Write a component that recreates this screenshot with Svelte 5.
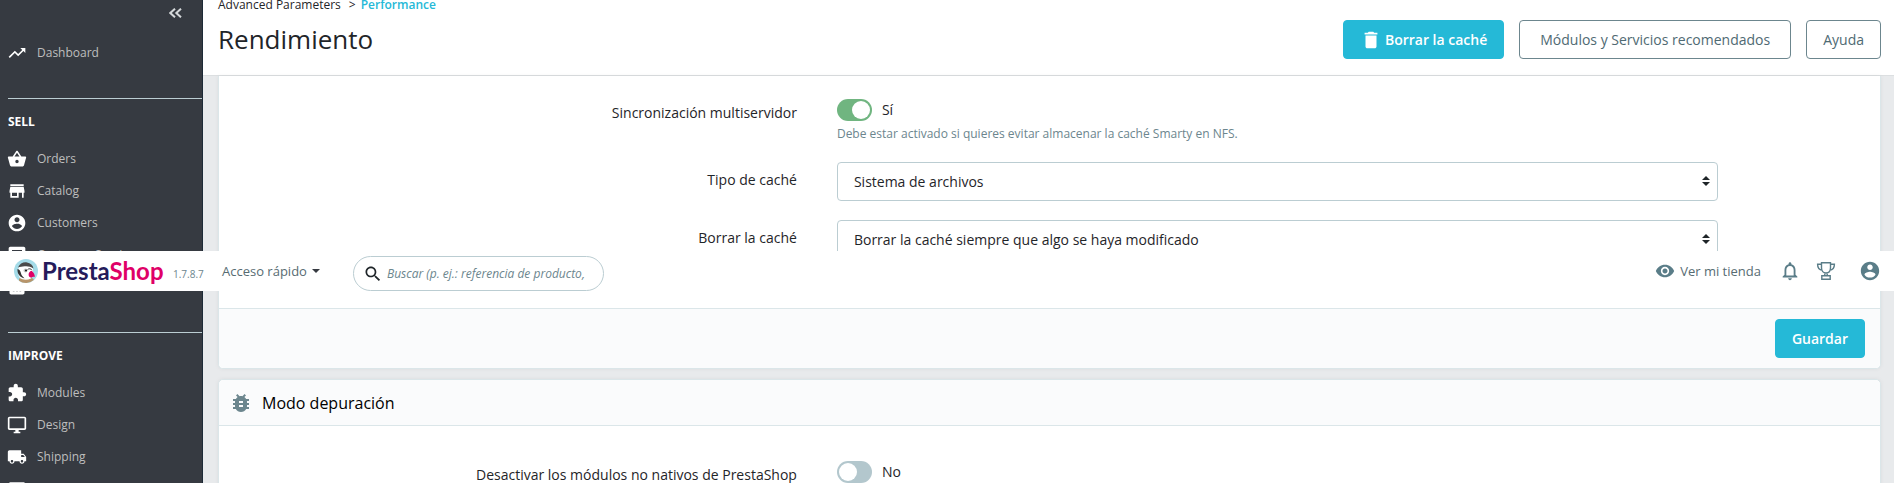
<script>
  const icons = {
    dashboard: 'M16 6l2.29 2.29-4.88 4.88-4-4L2 16.59 3.41 18l6-6 4 4 6.3-6.29L22 12V6z',
    basket: 'M17.21 9l-4.38-6.56c-.19-.28-.51-.42-.83-.42-.32 0-.64.14-.83.43L6.79 9H2c-.55 0-1 .45-1 1 0 .09.01.18.04.27l2.54 9.27c.23.84 1 1.46 1.92 1.46h13c.92 0 1.69-.62 1.93-1.46l2.54-9.27L23 10c0-.55-.45-1-1-1h-4.79zM9 9l3-4.4L15 9H9zm3 8c-1.1 0-2-.9-2-2s.9-2 2-2 2 .9 2 2-.9 2-2 2z',
    store: 'M20 4H4v2h16V4zm1 10v-2l-1-5H4l-1 5v2h1v6h10v-6h4v6h2v-6h1zm-9 4H6v-4h6v4z',
    person: 'M12 2C6.48 2 2 6.48 2 12s4.48 10 10 10 10-4.48 10-10S17.52 2 12 2zm0 3c1.66 0 3 1.34 3 3s-1.34 3-3 3-3-1.34-3-3 1.34-3 3-3zm0 14.2c-2.5 0-4.71-1.28-6-3.22.03-1.99 4-3.08 6-3.08 1.99 0 5.97 1.09 6 3.08-1.29 1.94-3.5 3.22-6 3.22z',
    chat: 'M20 2H4c-1.1 0-2 .9-2 2v18l4-4h14c1.1 0 2-.9 2-2V4c0-1.1-.9-2-2-2zM6 6h12v2H6V6zm12 5H6V9h12v2z',
    stats: 'M19 3H5c-1.1 0-2 .9-2 2v14c0 1.1.9 2 2 2h14c1.1 0 2-.9 2-2V5c0-1.1-.9-2-2-2zM9 17H7v-7h2v7zm4 0h-2V7h2v10zm4 0h-2v-4h2v4z',
    modules: 'M20.5 11H19V7c0-1.1-.9-2-2-2h-4V3.5C13 2.12 11.88 1 10.5 1S8 2.12 8 3.5V5H4c-1.1 0-1.99.9-1.99 2v3.8H3.5c1.49 0 2.7 1.21 2.7 2.7s-1.21 2.7-2.7 2.7H2V20c0 1.1.9 2 2 2h3.8v-1.5c0-1.49 1.21-2.7 2.7-2.7 1.49 0 2.7 1.21 2.7 2.7V22H17c1.1 0 2-.9 2-2v-4h1.5c1.38 0 2.5-1.12 2.5-2.5S21.88 11 20.5 11z',
    design: 'M21 2H3c-1.1 0-2 .9-2 2v12c0 1.1.9 2 2 2h7v2H8v2h8v-2h-2v-2h7c1.1 0 2-.9 2-2V4c0-1.1-.9-2-2-2zm0 14H3V4h18v12z',
    shipping: 'M20 8h-3V4H3c-1.1 0-2 .9-2 2v11h2c0 1.66 1.34 3 3 3s3-1.34 3-3h6c0 1.66 1.34 3 3 3s3-1.34 3-3h2v-5l-3-4zM6 18.5c-.83 0-1.5-.67-1.5-1.5s.67-1.5 1.5-1.5 1.5.67 1.5 1.5-.67 1.5-1.5 1.5zm13.5-9l1.96 2.5H17V9.5h2.5zm-1.5 9c-.83 0-1.5-.67-1.5-1.5s.67-1.5 1.5-1.5 1.5.67 1.5 1.5-.67 1.5-1.5 1.5z',
    payment: 'M20 4H4c-1.11 0-1.99.89-1.99 2L2 18c0 1.11.89 2 2 2h16c1.11 0 2-.89 2-2V6c0-1.11-.89-2-2-2zm0 14H4v-6h16v6zm0-10H4V6h16v2z',
    trash: 'M6 19c0 1.1.9 2 2 2h8c1.1 0 2-.9 2-2V7H6v12zM19 4h-3.5l-1-1h-5l-1 1H5v2h14V4z',
    bug: 'M20 8h-2.81c-.45-.78-1.07-1.45-1.82-1.96L17 4.41 15.59 3l-2.17 2.17C12.96 5.06 12.49 5 12 5c-.49 0-.96.06-1.41.17L8.41 3 7 4.41l1.62 1.63C7.88 6.55 7.26 7.22 6.81 8H4v2h2.09c-.05.33-.09.66-.09 1v1H4v2h2v1c0 .34.04.67.09 1H4v2h2.81c1.04 1.79 2.97 3 5.19 3s4.15-1.21 5.19-3H20v-2h-2.09c.05-.33.09-.66.09-1v-1h2v-2h-2v-1c0-.34-.04-.67-.09-1H20V8zm-6 8h-4v-2h4v2zm0-4h-4v-2h4v2z',
    search: 'M15.5 14h-.79l-.28-.27C15.41 12.59 16 11.11 16 9.5 16 5.91 13.09 3 9.5 3S3 5.91 3 9.5 5.91 16 9.5 16c1.61 0 3.09-.59 4.23-1.57l.27.28v.79l5 4.99L20.49 19l-4.99-5zm-6 0C7.01 14 5 11.99 5 9.5S7.01 5 9.5 5 14 7.01 14 9.5 11.99 14 9.5 14z',
    eye: 'M12 4.5C7 4.5 2.73 7.61 1 12c1.73 4.39 6 7.5 11 7.5s9.27-3.11 11-7.5c-1.73-4.39-6-7.5-11-7.5zM12 17c-2.76 0-5-2.24-5-5s2.24-5 5-5 5 2.24 5 5-2.24 5-5 5zm0-8c-1.66 0-3 1.34-3 3s1.34 3 3 3 3-1.34 3-3-1.34-3-3-3z',
    bell: 'M12 22c1.1 0 2-.9 2-2h-4c0 1.1.9 2 2 2zm6-6v-5c0-3.07-1.63-5.64-4.5-6.32V4c0-.83-.67-1.5-1.5-1.5s-1.5.67-1.5 1.5v.68C7.64 5.36 6 7.92 6 11v5l-2 2v1h16v-1l-2-2zm-2 1H8v-6c0-2.48 1.51-4.5 4-4.5s4 2.02 4 4.5v6z'
  };

  const sections = [
    {
      title: 'SELL',
      items: [
        ['basket', 'Orders'],
        ['store', 'Catalog'],
        ['person', 'Customers'],
        ['chat', 'Customer Service'],
        ['stats', 'Stats']
      ]
    },
    {
      title: 'IMPROVE',
      items: [
        ['modules', 'Modules'],
        ['design', 'Design'],
        ['shipping', 'Shipping'],
        ['payment', 'Payment']
      ]
    }
  ];

  let sync = $state(true);
  let noModules = $state(false);
</script>

{#snippet icon(name)}
  <svg class="icon" viewBox="0 0 24 24" aria-hidden="true"><path d={icons[name]} /></svg>
{/snippet}

{#snippet arrows()}
  <svg class="arrows" viewBox="0 0 8 10" aria-hidden="true"><path d="M4 0l4 4H0zM4 10L0 6h8z" /></svg>
{/snippet}

<div class="page">
  <nav class="sidebar">
    <button class="collapse" aria-label="«">
      <svg viewBox="0 0 13 10" aria-hidden="true"><path d="M6 .7L1.3 5 6 9.3M12 .7L7.300 5 12 9.300" /></svg>
    </button>
    <a class="item" href="#dashboard">{@render icon('dashboard')}<span>Dashboard</span></a>
    {#each sections as section}
      <section>
        <h2>{section.title}</h2>
        {#each section.items as [name, label]}
          <a class="item" href="#{name}">{@render icon(name)}<span>{label}</span></a>
        {/each}
      </section>
    {/each}
  </nav>

  <div class="content">
    <header class="head">
      <div class="titles">
        <div class="crumbs">
          <a href="#advanced">Advanced Parameters</a><span class="sep">&gt;</span><a class="current" href="#performance">Performance</a>
        </div>
        <h1>Rendimiento</h1>
      </div>
      <div class="actions">
        <button class="btn primary">{@render icon('trash')}<span>Borrar la caché</span></button>
        <button class="btn outline wide">Módulos y Servicios recomendados</button>
        <button class="btn outline">Ayuda</button>
      </div>
    </header>

    <main>
      <section class="card first">
        <div class="body">
          <div class="row">
            <label class="name" for="sync">Sincronización multiservidor</label>
            <div class="field">
              <label class="switch">
                <input id="sync" type="checkbox" bind:checked={sync} />
                <span>{sync ? 'Sí' : 'No'}</span>
              </label>
              <small>Debe estar activado si quieres evitar almacenar la caché Smarty en NFS.</small>
            </div>
          </div>
          <div class="row tall">
            <label class="name" for="type">Tipo de caché</label>
            <div class="field select">
              <select id="type"><option>Sistema de archivos</option></select>
              {@render arrows()}
            </div>
          </div>
          <div class="row tall">
            <label class="name" for="clear">Borrar la caché</label>
            <div class="field select">
              <select id="clear"><option>Borrar la caché siempre que algo se haya modificado</option></select>
              {@render arrows()}
            </div>
          </div>
        </div>
        <footer><button class="btn primary save">Guardar</button></footer>
      </section>

      <section class="card">
        <h3>{@render icon('bug')}<span>Modo depuración</span></h3>
        <div class="body debug">
          <div class="row">
            <label class="name" for="nomodules">Desactivar los módulos no nativos de PrestaShop</label>
            <div class="field">
              <label class="switch">
                <input id="nomodules" type="checkbox" bind:checked={noModules} />
                <span>{noModules ? 'Sí' : 'No'}</span>
              </label>
            </div>
          </div>
        </div>
      </section>
    </main>
  </div>

  <div class="topbar">
    <a class="brand" href="#home">
      <svg viewBox="0 0 24 24" aria-hidden="true">
        <circle cx="12" cy="12" r="12" fill="#a4dbe8" />
        <path d="M5 19.500c4-1.500 10-1.500 14 0l.8 1.600A12 12 0 0 1 5 21.700z" fill="#b8956a" />
        <path d="M4.500 9c1-4 5-5.500 8-5 4 .5 6.500 3.500 6.500 7l-2 8.500c-4 1.800-8 1.600-11-.5-2-3-2.500-6-1.500-10z" fill="#fff" />
        <path d="M4 8.500C5.500 4.500 9.500 2.800 13 3.400c3.500.6 6 2.600 6.500 6.100-3-2-6-2.600-9-2.200-2.300.3-4.500.4-6.500 1.200z" fill="#4a4a4a" />
        <path d="M3.500 10c2 .5 2.800 1.800 3.300 3.800s1.200 3.500 3.700 5.400c-4-.3-7.500-4.200-7-9.200z" fill="#333" />
        <path d="M13.500 10.500c1.500-1.200 3.600-.9 4.500.7" fill="none" stroke="#333" stroke-width=".9" />
        <circle cx="11.500" cy="11.500" r="2" fill="#c9c9c9" />
        <circle cx="12" cy="11.500" r="1.100" fill="#222" />
        <path d="M17.500 11.700c2 1.500 3.500 3.800 3.300 6.300-1.500-.5-2.500-.3-3.500.7-1.700-.4-2.700-1.500-2.700-3.300 0-1.700 1.200-3.200 2.900-3.700z" fill="#df0067" />
      </svg>
      <span class="presta">Presta<span>Shop</span></span>
    </a>
    <span class="version">1.7.8.7</span>
    <button class="quick">Acceso rápido <i></i></button>
    <label class="search">
      {@render icon('search')}
      <input type="text" aria-label="Buscar" placeholder="Buscar (p. ej.: referencia de producto," />
    </label>
    <div class="tools">
      <a class="shop" href="#shop">{@render icon('eye')}<span>Ver mi tienda</span></a>
      <button class="bell" aria-label="Notificaciones">{@render icon('bell')}</button>
      <button class="trophy" aria-label="Logros">
        <svg viewBox="0 0 20 20" aria-hidden="true"><path d="M5.500 1.800h9v5c0 3-1.800 5.200-4.500 5.200S5.500 9.800 5.500 6.800zM5.500 3.300H1.600c0 3.800 1.600 5.700 4.700 5.900M14.500 3.300h3.900c0 3.800-1.600 5.700-4.700 5.900M8.800 12v2.800M11.200 12v2.800M5.800 14.800h8.400v3.500H5.800z" /></svg>
      </button>
      <button class="user" aria-label="Perfil">{@render icon('person')}</button>
    </div>
  </div>
</div>

<style>
  :global(body) {
    overflow: hidden;
  }
  * {
    box-sizing: border-box;
  }
  .page {
    position: relative;
    display: flex;
    height: 100vh;
    overflow: hidden;
    background: #e8eaec;
    color: #1f2529;
    font: 14px/20px "Open Sans", sans-serif;
  }
  a {
    color: inherit;
    text-decoration: none;
  }
  button {
    padding: 0;
    border: 0;
    background: none;
    color: inherit;
    font: inherit;
    cursor: pointer;
  }
  h1, h2, h3 {
    margin: 0;
    font-weight: 400;
  }
  .icon {
    flex: none;
    width: 20px;
    height: 20px;
    fill: currentColor;
  }

  .sidebar {
    flex: none;
    width: 203px;
    padding-left: 8px;
    border-right: 1px solid #1d2a37;
    background: #363a41;
    color: #fff;
  }
  .collapse {
    display: flex;
    align-items: center;
    height: 25px;
    margin: 0 20px 12px auto;
  }
  .collapse svg {
    width: 13px;
    height: 10px;
    fill: none;
    stroke: #d5d8da;
    stroke-width: 2;
  }
  .item {
    display: flex;
    align-items: center;
    gap: 10px;
    height: 32px;
    color: #bebebe;
    font-size: 12px;
  }
  .item .icon {
    color: #fff;
    margin-left: -1px;
  }
  .sidebar section {
    margin-top: 29px;
    border-top: 1px solid #bbcdd2;
  }
  .sidebar h2 {
    height: 44px;
    padding: 13px 0 11px;
    font-size: 12px;
    font-weight: 700;
  }

  .content {
    flex: 1;
    min-width: 0;
  }
  .head {
    display: flex;
    justify-content: space-between;
    height: 76px;
    padding: 0 13px 0 15px;
    border-bottom: 1px solid #dcdfe1;
    background: #fff;
  }
  .crumbs {
    display: flex;
    height: 20px;
    margin-top: -5px;
    font-size: 12px;
  }
  .sep {
    margin: 0 5px 0 8px;
  }
  .current {
    color: #25b9d7;
    font-weight: 600;
  }
  h1 {
    margin-top: 8px;
    font-size: 26px;
    line-height: 32px;
  }
  .actions {
    display: flex;
    gap: 15px;
    margin-top: 20px;
  }
  .btn {
    display: flex;
    align-items: center;
    justify-content: center;
    gap: 3px;
    height: 39px;
    padding: 0 16px;
    border: 1px solid #6c868e;
    border-radius: 4px;
    color: #4f6a73;
    font-size: 14px;
    font-weight: 600;
  }
  .btn .icon {
    width: 22px;
    height: 22px;
  }
  .outline {
    font-weight: 400;
  }
  .wide {
    padding: 0 20px;
  }
  .primary {
    border-color: #25b9d7;
    background: #25b9d7;
    color: #fff;
  }

  main {
    padding: 0 13px 0 15px;
  }
  .card {
    margin-bottom: 10px;
    border: 1px solid #dbe6e9;
    border-radius: 5px;
    background: #fff;
    box-shadow: 0 0 4px rgba(0, 0, 0, 0.06);
  }
  .first {
    border-top: 0;
    border-radius: 0 0 5px 5px;
  }
  .body {
    padding: 23px 9.75% 49px 14px;
  }
  .debug {
    padding-top: 35px;
  }
  .row {
    display: grid;
    grid-template-columns: 16fr 25fr;
    column-gap: 40px;
  }
  .row + .row {
    margin-top: 18px;
  }
  .row + .row + .row {
    margin-top: 19px;
  }
  .name {
    padding-top: 4px;
    text-align: right;
  }
  .tall .name {
    padding-top: 8px;
  }
  .switch {
    display: flex;
    align-items: center;
    gap: 10px;
    height: 22px;
  }
  .switch input {
    appearance: none;
    width: 35px;
    height: 22px;
    margin: 0;
    padding: 2px;
    border-radius: 11px;
    background: #b3c7cd;
  }
  .switch input::before {
    content: "";
    display: block;
    width: 18px;
    height: 18px;
    border-radius: 50%;
    background: #fff;
  }
  .switch input:checked {
    background: #70b580;
  }
  .switch input:checked::before {
    margin-left: auto;
  }
  small {
    display: block;
    margin-top: 3px;
    color: #6c868e;
    font-size: 12px;
  }
  .select {
    position: relative;
  }
  select {
    display: block;
    appearance: none;
    width: 100%;
    height: 39px;
    padding: 0 16px;
    border: 1px solid #bbcdd2;
    border-radius: 4px;
    background: #fff;
    color: inherit;
    font: inherit;
  }
  .arrows {
    position: absolute;
    top: 14px;
    right: 8px;
    width: 8px;
    height: 10px;
    fill: #1f2529;
  }
  footer {
    display: flex;
    justify-content: flex-end;
    padding: 10px 15px;
    border-top: 1px solid #dbe6e9;
    border-radius: 0 0 5px 5px;
    background: #fafbfc;
  }
  h3 {
    display: flex;
    align-items: center;
    gap: 9px;
    height: 46px;
    padding: 0 10px;
    border-bottom: 1px solid #dbe6e9;
    border-radius: 5px 5px 0 0;
    background: #fafbfc;
    color: #000;
    font-size: 16px;
  }
  h3 .icon {
    width: 24px;
    height: 24px;
    color: #6c868e;
  }

  /* Bar floating over the page */
  .topbar {
    position: absolute;
    top: 251px;
    left: 0;
    right: 0;
    display: flex;
    align-items: center;
    height: 40px;
    padding: 0 13px 0 14px;
    background: #fff;
  }
  .brand {
    display: flex;
    align-items: center;
    gap: 4px;
    width: 159px;
  }
  .brand svg {
    flex: none;
    width: 24px;
    height: 24px;
  }
  .presta {
    color: #251b5b;
    font: 700 24px/32px Lato, sans-serif;
  }
  .presta span {
    color: #df0067;
  }
  .version {
    width: 49px;
    padding-top: 5px;
    color: #6c868e;
    font-size: 10px;
  }
  .quick {
    display: flex;
    align-items: center;
    gap: 5px;
    width: 131px;
    color: #576c72;
    font-size: 13px;
  }
  .quick i {
    border: 4px solid transparent;
    border-top-color: #363a41;
    border-bottom: 0;
  }
  .search {
    display: flex;
    align-items: center;
    gap: 4px;
    width: 251px;
    height: 35px;
    margin-top: 5px;
    padding: 0 12px 0 9px;
    border: 1px solid #bbcdd2;
    border-radius: 18px;
  }
  .search input {
    width: 100%;
    min-width: 0;
    padding: 0;
    border: 0;
    outline: 0;
    background: none;
    font: italic 12px/20px "Open Sans", sans-serif;
  }
  .search input::placeholder {
    color: #6c868e;
  }
  .tools {
    display: flex;
    align-items: center;
    margin-left: auto;
    color: #576c72;
    font-size: 13px;
  }
  .tools button {
    display: flex;
  }
  .shop {
    display: flex;
    align-items: center;
    gap: 5px;
  }
  .tools .icon {
    color: #5a7d88;
  }
  .tools button .icon {
    width: 22px;
    height: 22px;
  }
  .bell {
    margin-left: 18px;
  }
  .trophy {
    margin-left: 15px;
  }
  .trophy svg {
    width: 20px;
    height: 20px;
    fill: none;
    stroke: #5a7d88;
    stroke-width: 1.4;
  }
  .user {
    margin-left: 23px;
  }
</style>
